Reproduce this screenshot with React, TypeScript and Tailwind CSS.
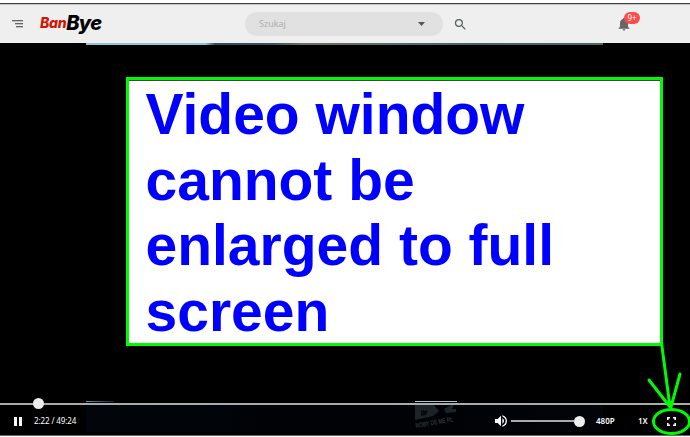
import React from "react";

function Header() {
  return (
    <header className="flex h-[43px] flex-col bg-white font-['Noto_Sans',sans-serif]">
      <div className="h-[3px]" />
      <div className="h-px bg-[#3f3f41]" />
      <div className="h-px bg-[#c4c4c4]" />
      <div className="flex h-[38px] items-center bg-[#efefef]">
        <svg className="ml-3 shrink-0" width="11" height="8" viewBox="0 0 11 8" shapeRendering="crispEdges">
          <path d="M0 0h11v1H0zM3 3h8v1H3zM4 6h7v1H4z" fill="#666" />
          <path d="M0 1h11v1H0zM3 4h8v1H3zM4 7h7v1H4z" fill="#c0c0c0" />
        </svg>
        <div className="-mt-[3px] ml-[17px] flex w-[66px] items-baseline whitespace-nowrap font-['Inter',sans-serif] italic">
          <span className="relative -top-[2px] text-[14px] font-extrabold leading-none tracking-[-0.3px] text-[#d01507]">Ban</span>
          <span className="text-[20px] font-extrabold leading-none tracking-[-0.7px] text-black">Bye</span>
        </div>
        <div className="ml-[139px] flex h-6 w-[198px] items-center justify-between rounded-full bg-[#e1e1e1] pl-[14px] pr-[18px]">
          <span className="text-[9px] text-[#b0b0b0]">Szukaj</span>
          <svg width="7" height="4" viewBox="0 0 7 4"><path d="M0 0h7L3.5 4z" fill="#555" /></svg>
        </div>
        <svg className="ml-[10px]" width="15" height="15" viewBox="0 0 24 24" fill="#55645c">
          <path d="M15.5 14h-.79l-.28-.27A6.47 6.47 0 0 0 16 9.5 6.5 6.5 0 1 0 9.5 16c1.61 0 3.09-.59 4.23-1.57l.27.28v.79l5 4.99L20.49 19l-4.99-5zm-6 0C7.01 14 5 11.99 5 9.5S7.01 5 9.5 5 14 7.01 14 9.5 11.99 14 9.5 14z" />
        </svg>
        <div className="relative ml-[148px] h-4 w-4">
          <svg width="16" height="16" viewBox="0 0 24 24" fill="#666">
            <path d="M12 22c1.1 0 2-.9 2-2h-4c0 1.1.9 2 2 2zm6-6v-5c0-3.07-1.64-5.64-4.5-6.32V4a1.5 1.5 0 0 0-3 0v.68C7.63 5.36 6 7.92 6 11v5l-2 2v1h16v-1l-2-2z" />
          </svg>
          <span className="absolute -top-[4px] left-2 flex h-3 w-4 items-center justify-center rounded-full bg-[#fd4b4b] text-[8px] leading-none text-white">9+</span>
        </div>
      </div>
    </header>
  );
}

function Controls() {
  return (
    <div className="relative flex h-[30px] items-center font-['Noto_Sans',sans-serif] text-white">
      <div className="absolute left-[86px] top-0 h-[27px] w-[517px] bg-gradient-to-r from-[#02060b] via-[#000205] to-[#020407]" />
      <svg className="absolute left-[415px] top-0" width="46" height="28" viewBox="0 0 46 28">
        <path d="M0 0h19l5 6-6 5-18 4zM29 4l7-4h3l-2 4h4v3l-10 1z" fill="#1c2429" />
        <path d="M6 5l7 1-2 4-5 1z" fill="#070b0e" />
        <text x="1" y="23" transform="rotate(-10 1 23)" fill="#2b3237" fontSize="7" fontWeight="700" fontFamily="Liberation Sans, sans-serif" textLength="38" lengthAdjust="spacingAndGlyphs">NOBY DE ME PL</text>
      </svg>
      <div className="relative mt-[2px] flex w-full items-center">
        <svg className="ml-[14px] shrink-0" width="8" height="9" viewBox="0 0 8 9"><path d="M0 0h3v9H0zM5 0h3v9H5z" fill="#fff" /></svg>
        <span className="ml-3 w-[44px] whitespace-nowrap text-[8px] leading-3 tracking-[-0.1px]">2:22 / 49:24</span>
        <svg className="ml-[415px] shrink-0" width="16" height="16" viewBox="0 0 24 24" fill="#fff">
          <path d="M3 9v6h4l5 5V4L7 9H3zm13.5 3c0-1.77-1.02-3.29-2.5-4.03v8.05c1.48-.73 2.5-2.25 2.5-4.02zM14 3.23v2.06c2.89.86 5 3.54 5 6.71s-2.11 5.85-5 6.71v2.06c4.01-.91 7-4.49 7-8.77s-2.99-7.86-7-8.77z" />
        </svg>
        <div className="ml-[2px] flex w-[74px] items-center">
          <div className="h-[2px] flex-1 bg-[#aaa]" />
          <div className="h-[11px] w-[11px] rounded-full bg-[#eee]" />
        </div>
        <span className="ml-[11px] w-[19px] whitespace-nowrap text-[8px] font-semibold leading-3">480P</span>
        <span className="ml-[23px] w-[10px] whitespace-nowrap text-[8px] font-semibold leading-3">1X</span>
        <svg className="ml-[19px] shrink-0" width="9" height="9" viewBox="0 0 9 9" fill="none" stroke="#fff" strokeWidth="1.6">
          <path d="M.8 3V.8H3M6 .8h2.2V3M8.2 6v2.2H6M3 8.2H.8V6" />
        </svg>
      </div>
    </div>
  );
}

export default function App() {
  return (
    <div className="relative flex h-[437px] w-[690px] flex-col overflow-hidden bg-black">
      <Header />
      <div className="ml-[86px] h-[2px] w-[517px] bg-[linear-gradient(90deg,#8fc6d6_0%,#8fc6d6_23%,#334d61_25%,#385363_36%,#6b7060_42%,#55706e_58%,#466562_75%,#4c6866_100%)]" />
      <main className="flex h-[357px] flex-col">
        <section className="ml-[126px] mt-8 h-[269px] w-[537px] border-[3px] border-[#00fb00] bg-white">
          <div className="h-px bg-[#444]" />
          <p className="w-[450px] pl-[16.5px] pt-px font-['Liberation_Sans',Arial,sans-serif] text-[57px] font-bold leading-[65.7px] text-[#0000ff]">
            Video window<br />cannot be<br />enlarged to full<br />screen
          </p>
        </section>
      </main>
      <div className="relative flex h-[3px] items-center">
        <div className="h-[2px] w-full bg-[#aaa]" />
        <div className="absolute -top-1 left-[33px] h-[11px] w-[11px] rounded-full bg-[#eee]" />
        <div className="absolute -top-px left-[86px] h-px w-[28px] bg-gradient-to-r from-[#6796af] to-[#07264b]" />
        <div className="absolute -top-px left-[415px] h-px w-[42px] bg-[#a8cbd9]" />
      </div>
      <Controls />
      <div className="h-px bg-[#666]" />
      <div className="h-px bg-white" />
      <svg className="pointer-events-none absolute inset-0" width="690" height="437" viewBox="0 0 690 437" fill="none" stroke="#00fb00" strokeWidth="3" strokeLinecap="round">
        <path d="M661.5 343L670 407M649 380L670 407M680 374L671 407" />
        <ellipse cx="671.5" cy="421.5" rx="18" ry="12" />
      </svg>
    </div>
  );
}
